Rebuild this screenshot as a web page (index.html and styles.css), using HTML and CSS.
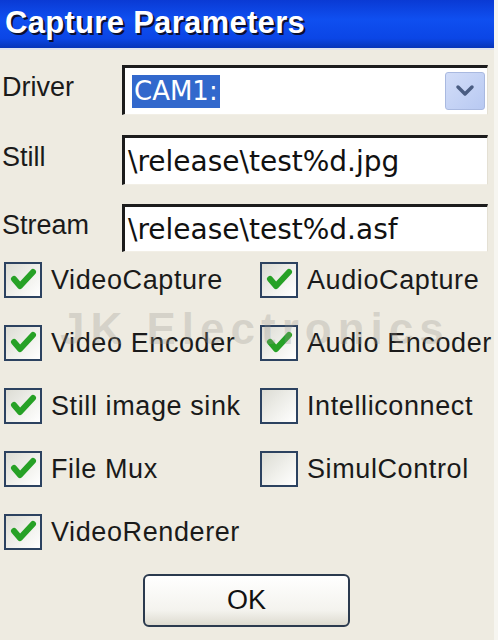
FILE: index.html
```html
<!DOCTYPE html>
<html lang="en">
<head>
    <meta charset="UTF-8">
    <meta name="viewport" content="width=device-width, initial-scale=1.0">
    <title>Capture Parameters</title>
    <link rel="stylesheet" href="styles.css">
</head>
<body>

    <div class="window">
        <header class="titlebar">
            <h1>Capture Parameters</h1>
        </header>

        <main class="dialog">
            <div class="field-row driver">
                <label>Driver</label>
                <div class="field combo">
                    <span class="selected">CAM1:</span>
                    <span class="drop">
                        <svg width="22" height="14" viewBox="0 0 22 14">
                            <path d="M4 3 L11 10 L18 3" fill="none" stroke="#4a5d82" stroke-width="3.5" stroke-linecap="round" stroke-linejoin="round"/>
                        </svg>
                    </span>
                </div>
            </div>

            <div class="field-row still">
                <label>Still</label>
                <div class="field">\release\test%d.jpg</div>
            </div>

            <div class="field-row stream">
                <label>Stream</label>
                <div class="field">\release\test%d.asf</div>
            </div>

            <section class="checks">
                <div class="check on"><span class="box"></span>VideoCapture</div>
                <div class="check on"><span class="box"></span>AudioCapture</div>
                <div class="check on"><span class="box"></span>Video Encoder</div>
                <div class="check on"><span class="box"></span>Audio Encoder</div>
                <div class="check on"><span class="box"></span>Still image sink</div>
                <div class="check"><span class="box"></span>Intelliconnect</div>
                <div class="check on"><span class="box"></span>File Mux</div>
                <div class="check"><span class="box"></span>SimulControl</div>
                <div class="check on"><span class="box"></span>VideoRenderer</div>
            </section>

            <div class="actions">
                <button>OK</button>
            </div>
        </main>

        <div class="watermark">JK Electronics</div>
    </div>

</body>
</html>
```

FILE: styles.css
```css
html {
    background: #f6f5f0;
}

body {
    margin: 0;
    padding: 0;
    font-family: "Liberation Sans", Arial, sans-serif;
    color: #1a1a1a;
}

.window {
    position: relative;
    width: 494px;
    height: 640px;
    overflow: hidden;
    background: #eeebe1;
}

.titlebar {
    height: 50px;
    background: linear-gradient(to bottom, #0a3ad4 0%, #0f4ff0 40%, #0b46e6 80%, #0634b8 100%);
    border-bottom: 2px solid #dfe3ee;
    box-sizing: border-box;
}

.titlebar h1 {
    margin: 0;
    padding: 5px 0 0 5px;
    font-size: 31px;
    font-weight: bold;
    color: #fff;
    letter-spacing: 0.3px;
    text-shadow: 2px 2px 0 #0b1030;
}

.dialog {
    padding: 0 6px 0 2px;
}

.field-row {
    display: flex;
    align-items: center;
    height: 50px;
}

.driver {
    margin-top: 15px;
}

.still {
    margin-top: 20px;
}

.stream {
    margin-top: 19px;
    height: 48px;
}

.field-row label {
    width: 120px;
    font-size: 27px;
    margin-top: -6px;
}

.field {
    flex: 1;
    height: 100%;
    box-sizing: border-box;
    background: #fff;
    border-top: 3px solid #1c1c1c;
    border-left: 3px solid #1c1c1c;
    border-right: 1px solid #e4e0d4;
    border-bottom: 1px solid #f2efe6;
    display: flex;
    align-items: center;
    padding-left: 3px;
    font-family: "DejaVu Sans", Verdana, sans-serif;
    font-size: 28px;
    color: #111;
}

.combo {
    padding-left: 7px;
    justify-content: space-between;
}

.selected {
    background: #3268cc;
    color: #fff;
    padding: 0 2px;
    line-height: 33px;
    font-size: 26px;
}

.drop {
    width: 40px;
    height: 38px;
    margin-right: 2px;
    box-sizing: border-box;
    background: linear-gradient(135deg, #d2ddf8, #b8c9f2);
    border: 1px solid #a9b9e0;
    border-radius: 3px;
    display: flex;
    align-items: center;
    justify-content: center;
}

.checks {
    display: grid;
    grid-template-columns: 256px 1fr;
    row-gap: 27px;
    margin-top: 10px;
    padding-left: 2px;
}

.check {
    display: flex;
    align-items: center;
    gap: 9px;
    height: 36px;
    font-size: 27px;
    letter-spacing: 0.6px;
    white-space: nowrap;
}

.box {
    flex: none;
    width: 38px;
    height: 36px;
    box-sizing: border-box;
    border: 2px solid #2c4260;
    background: linear-gradient(135deg, #dcdcd4 0%, #f2f2ee 60%, #ffffff 100%);
}

.check.on .box {
    background:
        url("data:image/svg+xml;utf8,<svg xmlns='http://www.w3.org/2000/svg' width='34' height='32' viewBox='0 0 34 32'><path d='M8 15 L14 22 L27 8' fill='none' stroke='%2326a126' stroke-width='6' stroke-linecap='round' stroke-linejoin='round'/></svg>") center no-repeat,
        linear-gradient(135deg, #dcdcd4 0%, #f2f2ee 60%, #ffffff 100%);
}

.actions {
    display: flex;
    padding-left: 141px;
    margin-top: 24px;
}

button {
    width: 207px;
    height: 53px;
    font-family: "Liberation Sans", Arial, sans-serif;
    font-size: 27px;
    color: #111;
    border: 2px solid #2b3a4e;
    border-radius: 6px;
    background: linear-gradient(to bottom, #ffffff 0%, #f4f3ee 70%, #dedbd0 100%);
}

.watermark {
    position: absolute;
    left: 60px;
    top: 304px;
    font-size: 44px;
    font-weight: bold;
    letter-spacing: 6px;
    color: rgba(150, 148, 140, 0.28);
    pointer-events: none;
}
```
